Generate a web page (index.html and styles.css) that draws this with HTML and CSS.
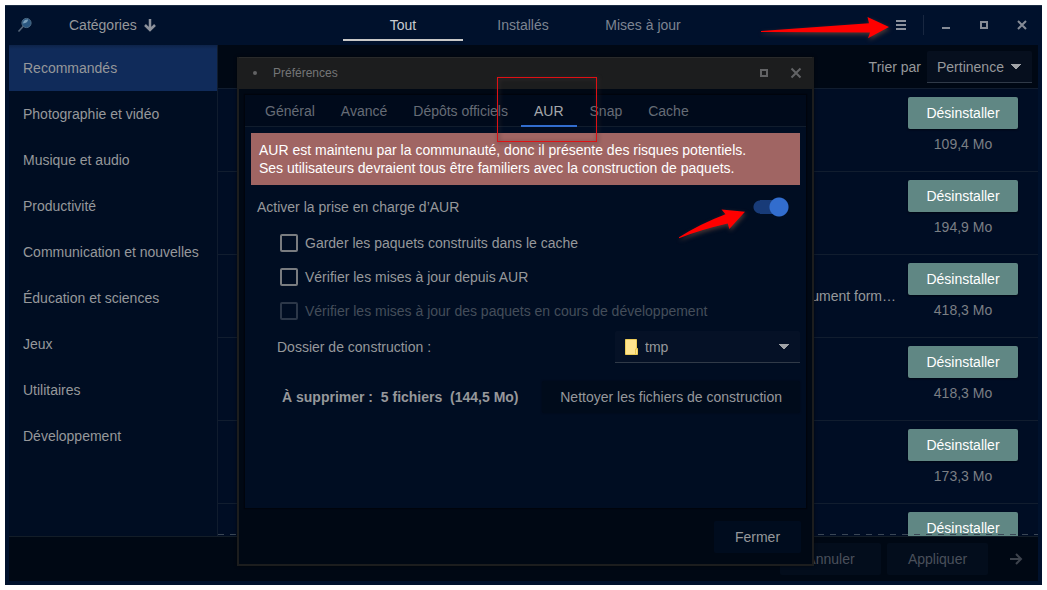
FILE: index.html
```html
<!DOCTYPE html>
<html lang="fr">
<head>
<meta charset="utf-8">
<title>Préférences</title>
<link rel="stylesheet" href="styles.css">
</head>
<body>
<div class="app">
  <header class="titlebar">
    <div class="titlebar-start">
      <button class="icon-button search" aria-label="Rechercher">
        <svg width="16" height="16" viewBox="0 0 16 16"><path d="M1.5 14.5L6.5 9" stroke="#56677a" stroke-width="1.6"/><circle cx="9.5" cy="6" r="4.6" fill="#2a5780" stroke="#4d6b84" stroke-width="1"/><path d="M6 6.5Q6.5 2.3 11 2.5Q11 6 6 6.5" fill="#7ba0bb"/></svg>
      </button>
      <button class="categories">Catégories
        <svg width="14" height="14" viewBox="0 0 14 14" fill="none" stroke="#8d929c" stroke-width="2.5"><path d="M7 1V12M2 7L7 12L12 7"/></svg>
      </button>
    </div>
    <nav class="views">
      <button class="view active">Tout</button>
      <button class="view">Installés</button>
      <button class="view">Mises à jour</button>
    </nav>
    <div class="window-controls">
      <button class="icon-button" aria-label="Menu"><svg width="12" height="12" viewBox="0 0 12 12" fill="#8b919c"><path d="M1 1h10v2H1zM1 5h10v2H1zM1 9h10v2H1z"/></svg></button>
      <span class="divider"></span>
      <button class="icon-button" aria-label="Réduire"><svg width="12" height="12" viewBox="0 0 12 12" fill="#858b96"><path d="M2 8h8v2H2z"/></svg></button>
      <button class="icon-button" aria-label="Agrandir"><svg width="12" height="12" viewBox="0 0 12 12" fill="none" stroke="#858b96" stroke-width="2"><path d="M3 3h6v6H3z"/></svg></button>
      <button class="icon-button" aria-label="Fermer la fenêtre"><svg width="12" height="12" viewBox="0 0 12 12" fill="none" stroke="#858b96" stroke-width="2"><path d="M2 2l8 8M10 2l-8 8"/></svg></button>
    </div>
  </header>
  <div class="main">
    <nav class="sidebar">
      <button class="category selected">Recommandés</button>
      <button class="category">Photographie et vidéo</button>
      <button class="category">Musique et audio</button>
      <button class="category">Productivité</button>
      <button class="category">Communication et nouvelles</button>
      <button class="category">Éducation et sciences</button>
      <button class="category">Jeux</button>
      <button class="category">Utilitaires</button>
      <button class="category">Développement</button>
    </nav>
    <section class="content">
      <div class="sortbar">
        <label for="sort">Trier par</label>
        <select id="sort" class="select sort"><option>Pertinence</option></select>
      </div>
      <ul class="packages">
        <li class="package"><div class="package-action"><button class="remove">Désinstaller</button><span>109,4 Mo</span></div></li>
        <li class="package"><div class="package-action"><button class="remove">Désinstaller</button><span>194,9 Mo</span></div></li>
        <li class="package"><span class="summary">ument form…</span><div class="package-action"><button class="remove">Désinstaller</button><span>418,3 Mo</span></div></li>
        <li class="package"><div class="package-action"><button class="remove">Désinstaller</button><span>418,3 Mo</span></div></li>
        <li class="package"><div class="package-action"><button class="remove">Désinstaller</button><span>173,3 Mo</span></div></li>
        <li class="package"><div class="package-action"><button class="remove">Désinstaller</button></div></li>
      </ul>
    </section>
  </div>
  <footer class="actions">
    <button class="action" disabled>Annuler</button>
    <button class="action" disabled>Appliquer</button>
    <button class="icon-button next" aria-label="Suivant"><svg width="14" height="14" viewBox="0 0 14 14" fill="none" stroke="#3d434d" stroke-width="2"><path d="M1 7H12M7 2L12 7L7 12"/></svg></button>
  </footer>
</div>

<div class="dialog" role="dialog" aria-label="Préférences">
  <header class="dialog-title">
    <span class="dot"></span>
    <h1>Préférences</h1>
    <button class="icon-button" aria-label="Agrandir"><svg width="12" height="12" viewBox="0 0 12 12" fill="none" stroke="#626365" stroke-width="2"><path d="M3 3h6v6H3z"/></svg></button>
    <button class="icon-button" aria-label="Fermer les préférences"><svg width="12" height="12" viewBox="0 0 12 12" fill="none" stroke="#626365" stroke-width="2"><path d="M1.5 1.5l9 9M10.5 1.5l-9 9"/></svg></button>
  </header>
  <div class="notebook">
    <nav class="tabs">
      <button class="tab">Général</button>
      <button class="tab">Avancé</button>
      <button class="tab">Dépôts officiels</button>
      <button class="tab active">AUR</button>
      <button class="tab">Snap</button>
      <button class="tab">Cache</button>
    </nav>
    <div class="page">
      <p class="warning">AUR est maintenu par la communauté, donc il présente des risques potentiels.<br>Ses utilisateurs devraient tous être familiers avec la construction de paquets.</p>
      <div class="row enable"><label for="aur">Activer la prise en charge d’AUR</label><input id="aur" class="switch" type="checkbox" role="switch" checked></div>
      <div class="checks">
        <label class="check"><input type="checkbox">Garder les paquets construits dans le cache</label>
        <label class="check"><input type="checkbox">Vérifier les mises à jour depuis AUR</label>
        <label class="check off"><input type="checkbox" disabled>Vérifier les mises à jour des paquets en cours de développement</label>
      </div>
      <div class="row folder">
        <label for="folder">Dossier de construction :</label>
        <div class="folder-field">
          <select id="folder" class="select folder-select"><option>tmp</option></select>
          <svg class="folder-icon" width="13" height="16" viewBox="0 0 13 16"><path d="M.5.5h11v9h1v6H.5z" fill="#ffe48f" stroke="#eccb58"/><path d="M10.5 15v-5h2" fill="none" stroke="#eac84e"/></svg>
        </div>
      </div>
      <div class="row clean">
        <strong>À supprimer :&nbsp; 5 fichiers&nbsp; (144,5 Mo)</strong>
        <button class="clean-button">Nettoyer les fichiers de construction</button>
      </div>
    </div>
  </div>
  <footer class="dialog-footer"><button class="close">Fermer</button></footer>
</div>

<svg class="annotations" width="1047" height="590" viewBox="0 0 1047 590">
  <g class="arrows" fill="#f00">
    <path d="M761 31L869 23.3L867.5 17L889 27L868 38.3L870 32.5L761 32Z"/>
    <path d="M679 237.3Q700 224 725.5 214.3L721.5 209.6L745 211.8L729.3 229L727.7 223.6Q700 230 679 238.3Z"/>
  </g>
  <rect class="highlight" x="497.5" y="77.5" width="99" height="64" fill="none" stroke="#df1014"/>
</svg>
</body>
</html>
```
FILE: styles.css
```css
* { box-sizing: border-box; }
body {
  margin: 0;
  padding: 5px;
  min-height: 100vh;
  display: flex;
  position: relative;
  background: #fff;
  color: #96989b;
  font: 14px/18px "Liberation Sans", Arial, sans-serif;
  overflow: hidden;
}
button, select, input { font: inherit; color: inherit; margin: 0; }
button { border: 0; padding: 0; background: none; white-space: nowrap; }
svg { display: block; flex: none; }

.app {
  flex: 1;
  min-width: 0;
  height: calc(100vh - 10px);
  display: flex;
  flex-direction: column;
  padding: 0 4px 4px;
  background: #00112c;
}
.titlebar {
  display: grid;
  grid-template-columns: 1fr 360px 1fr;
  height: 40px;
  flex: none;
  margin: 0 -4px;
  padding-right: 1px;
  border-top: 1px solid #1a2c43;
}
.titlebar-start, .window-controls { display: flex; align-items: center; padding-bottom: 2px; }
.titlebar-start { padding-left: 12px; gap: 36px; }
.categories { display: flex; align-items: center; gap: 6px; }
.views { display: grid; grid-template-columns: repeat(3, 1fr); padding-bottom: 4px; }
.view { padding-top: 4px; border-bottom: 2px solid transparent; color: #7d8491; }
.view.active { color: #c9ccd1; border-color: #c8c8c8; }
.window-controls { justify-content: flex-end; gap: 22px; padding-right: 11px; }
.window-controls .icon-button { width: 16px; display: flex; justify-content: center; }
.divider { width: 1px; height: 20px; background: #182740; margin: 0 -8px; }

.main { flex: 1; min-height: 0; display: flex; }
.sidebar {
  width: 209px;
  flex: none;
  display: flex;
  flex-direction: column;
  background: #000d22;
  border-right: 1px solid #101c2e;
}
.category { height: 46px; padding: 0 14px; text-align: left; }
.category.selected { background: linear-gradient(#0d2349, #102b5a 4px); }

.content {
  flex: 1;
  min-width: 0;
  position: relative;
  display: flex;
  flex-direction: column;
  background: #000d24;
  overflow: hidden;
}
.content::after {
  content: "";
  position: absolute;
  left: 0;
  right: 0;
  bottom: 1px;
  height: 1px;
  background: repeating-linear-gradient(90deg, #3a4655 0 6px, transparent 6px 12px);
}
.sortbar {
  height: 44px;
  flex: none;
  display: flex;
  align-items: center;
  justify-content: flex-end;
  gap: 6px;
  padding: 1px 6px 0 0;
  background: #000814;
  border-bottom: 1px solid #111d2f;
}
.select {
  appearance: none;
  height: 32px;
  border: 0;
  border-bottom: 1px solid #303a48;
  border-radius: 2px 2px 0 0;
  background:
    linear-gradient(to bottom left, #a0a3a7 50%, transparent 51%) right 16px center / 5px 5px no-repeat,
    linear-gradient(to bottom right, #a0a3a7 50%, transparent 51%) right 11px center / 5px 5px no-repeat,
    #051126;
}
.sort { width: 105px; padding: 0 10px; background-color: #060f1e; }

.packages { list-style: none; margin: 0; padding: 0; }
.package {
  height: 83px;
  display: flex;
  justify-content: flex-end;
  gap: 12px;
  padding: 8px 20px 0 0;
  border-bottom: 1px solid #111d2f;
}
.summary { padding-top: 24px; }
.package-action {
  width: 110px;
  display: flex;
  flex-direction: column;
  gap: 6px;
  text-align: center;
  color: #7b7f84;
}
.remove {
  height: 32px;
  border-radius: 2px;
  background: #608784;
  color: #fff;
  box-shadow: 0 1px 2px #000714;
}

.actions {
  height: 45px;
  flex: none;
  display: flex;
  align-items: center;
  justify-content: flex-end;
  gap: 6px;
  padding-right: 15px;
  background: #000814;
  border-top: 1px solid #131d28;
}
.action { width: 101px; height: 32px; border-radius: 2px; background: #030d1c; color: #4a505b; }
.next { margin-left: 15px; }

.dialog {
  position: absolute;
  left: 237px;
  top: 57px;
  width: 577px;
  display: flex;
  flex-direction: column;
  background: #000814;
  border: 2px solid #1c1d1e;
  border-top: 0;
  box-shadow: 0 0 3px #0008;
}
.dialog-title {
  display: flex;
  align-items: center;
  height: 32px;
  gap: 20px;
  padding: 0 10px 2px 14px;
  background: #1c1d1e;
  border-top: 1px solid #292a2b;
}
.dot { width: 4px; height: 4px; border-radius: 2px; background: #626365; }
h1 { flex: 1; margin: 0 0 0 -4px; font-size: 12px; font-weight: 400; color: #747577; }
.notebook { margin: 6px 6px 0; height: 413px; background: #000d22; box-shadow: 0 0 1px 1px #00040c; }
.tabs { display: flex; height: 32px; padding-left: 7px; background: #000a1b; border-bottom: 1px solid #111d2d; }
.tab { height: 32px; padding: 2px 13px 0; border-bottom: 2px solid transparent; color: #666c76; }
.tab.active { color: #a5a8ac; border-color: #326dce; }
.page { display: flex; flex-direction: column; padding: 6px; }
.warning { margin: 0; padding: 8px; background: #a06563; color: #fff; }
.row { display: flex; align-items: center; justify-content: space-between; }
.enable { height: 41px; padding: 3px 11px 0 6px; }
.switch {
  appearance: none;
  width: 37px;
  height: 20px;
  background:
    radial-gradient(circle at 27px 10px, #326dce 9px, transparent 10px),
    radial-gradient(circle at 8px 10px, #183b78 6px, transparent 7px),
    linear-gradient(#183b78, #183b78) 8px 3px / 20px 14px no-repeat;
}
.checks { display: flex; flex-direction: column; padding: 0 0 3px 29px; }
.check { display: flex; align-items: center; gap: 7px; height: 34px; }
.check input { appearance: none; width: 18px; height: 18px; border: 2px solid #797c80; border-radius: 2px; }
.check.off { color: #444d5a; }
.check.off input { border-color: #2c3748; }
.folder { padding-left: 26px; }
.folder-field { position: relative; width: 185px; }
.folder-select { display: block; width: 100%; padding: 0 30px; }
.folder-icon { position: absolute; left: 10px; top: 8px; }
.clean { margin-top: 18px; padding-left: 31px; }
.clean-button { height: 32px; padding: 0 18px; border-radius: 2px; background: #000b1b; box-shadow: 0 0 2px #000916; }
.dialog-footer { height: 56px; display: flex; align-items: center; justify-content: flex-end; padding: 2px 11px 0; }
.close { width: 87px; height: 32px; border-radius: 2px; background: #000c1e; }

.annotations { position: absolute; left: 0; top: 0; pointer-events: none; }
.arrows { filter: drop-shadow(1px 2px 2px #4a3836); }
.highlight { filter: drop-shadow(1px 1px 2px #433438); }
```
